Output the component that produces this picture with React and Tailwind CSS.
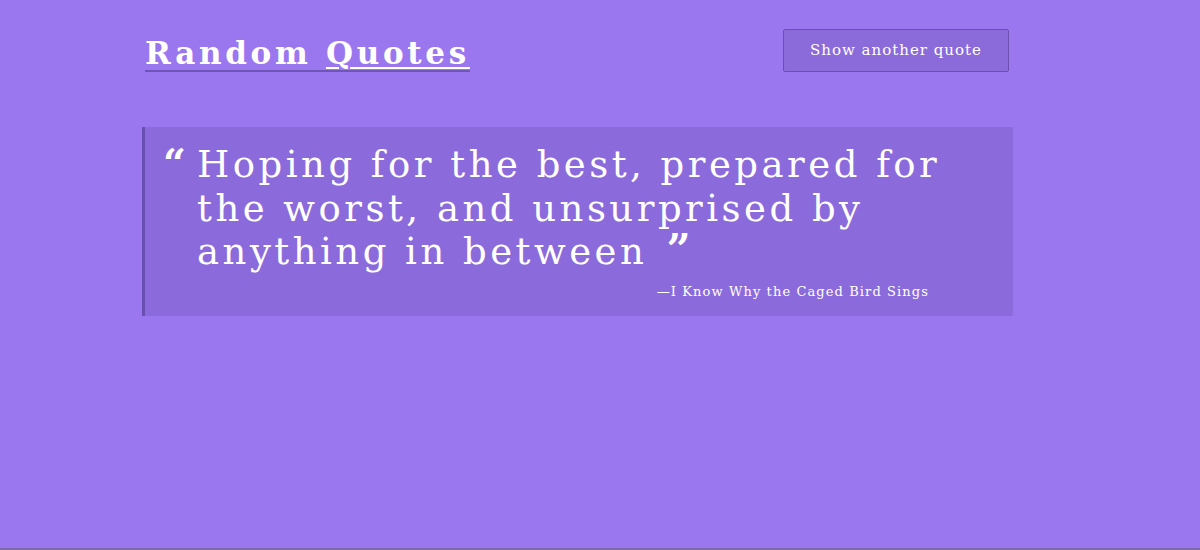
import React from 'react';

const quote = {
  text: 'Hoping for the best, prepared for the worst, and unsurprised by anything in between',
  source: 'I Know Why the Caged Bird Sings',
};

const App = () => {
  return (
    <div
      className="h-[550px] w-full bg-[#9b77ef] text-white flex flex-col border-b-2 border-[#7d6aa8]"
      style={{ fontFamily: '"DejaVu Serif", "Liberation Serif", serif' }}
    >
      <div className="w-[871px] ml-[142px] pt-[29px]">
        <header className="flex items-start justify-between">
          <h1 className="ml-[3px] mt-[7px] text-[31px] font-bold leading-[34px] tracking-[3.7px] border-b-2 border-[#6f55b8]">
            Random <span className="underline decoration-[2px] underline-offset-[3px]">Quotes</span>
          </h1>
          <button className="mr-[4px] w-[226px] h-[43px] bg-[#8b6ad9] border border-[#6b51ad] rounded-[2px] text-[15px] tracking-[1px] text-white">
            Show another quote
          </button>
        </header>

        <blockquote className="mt-[55px] bg-[#8b6bdb] border-l-[3px] border-[#6a4fb3] rounded-r-[2px] pt-[16px] pb-[14px] pl-[18px] pr-[10px]">
          <div className="flex">
            <span className="text-[40px] leading-[43.5px] font-bold mr-[11px] mt-[-2px]">“</span>
            <p className="w-[790px] text-[37px] leading-[43.5px] tracking-[3.5px]">
              {quote.text}{' '}
              <span className="ml-[4px] text-[42px] leading-[0] font-bold">”</span>
            </p>
          </div>
          <p className="text-right text-[13px] leading-[20px] tracking-[1.1px] mt-[8px] mr-[74px]">—{quote.source}</p>
        </blockquote>
      </div>
    </div>
  );
};

export default App;
